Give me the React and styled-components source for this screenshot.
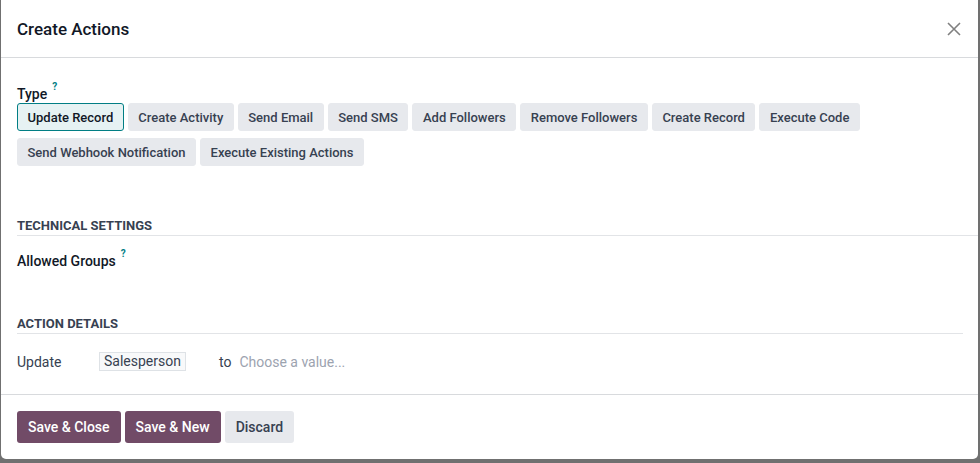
import React from "react";
import styled, { createGlobalStyle } from "styled-components";

const Global = createGlobalStyle`
  html, body { margin: 0; padding: 0; background: #707070; }
  body { font-family: Roboto, "Noto Sans", sans-serif; color: #374151; }
  * { box-sizing: border-box; }
`;

const Backdrop = styled.div`
  width: 980px;
  height: 463px;
  background: #707070;
  padding-left: 1px;
  overflow: hidden;
`;

const Modal = styled.div`
  width: 977px;
  height: 459px;
  background: #fff;
  border-radius: 0 0 5px 5px;
  display: flex;
  flex-direction: column;
`;

const Header = styled.div`
  height: 58px;
  flex-shrink: 0;
  border-bottom: 1px solid #d8dadd;
  display: flex;
  align-items: center;
  justify-content: space-between;
  padding: 0 16px 0 16px;
`;

const Title = styled.h4`
  margin: 0;
  font-size: 17px;
  font-weight: 500;
  color: #111827;
`;

const Close = styled.button`
  border: none;
  background: none;
  padding: 0;
  width: 16px;
  height: 16px;
  display: flex;
  align-items: center;
  justify-content: center;
  cursor: pointer;
`;

const Body = styled.div`
  height: 336px;
  flex-shrink: 0;
  padding: 27px 0 0 16px;
  display: flex;
  flex-direction: column;
`;

const Label = styled.div`
  font-size: 14px;
  font-weight: 500;
  color: #111827;
  line-height: 18px;
  display: flex;
  align-items: flex-start;
  gap: 5px;
  margin-top: ${(p) => p.$mt || 0}px;
`;

const Help = styled.sup`
  font-size: 10px;
  color: #017e84;
  font-weight: 700;
  line-height: 10px;
  vertical-align: top;
  margin-top: -3px;
`;

const Choices = styled.div`
  display: flex;
  flex-wrap: wrap;
  gap: 7px 4px;
  width: 900px;
`;

const Choice = styled.button`
  height: 28px;
  padding: 0 9.5px;
  font-family: inherit;
  font-size: 13px;
  font-weight: 500;
  border-radius: 3px;
  border: 1px solid ${(p) => (p.$active ? "#017e84" : "#e7e9ed")};
  background: ${(p) => (p.$active ? "#e6f2f3" : "#e7e9ed")};
  color: ${(p) => (p.$active ? "#111827" : "#374151")};
  cursor: pointer;
`;

const Section = styled.div`
  margin-top: ${(p) => p.$mt}px;
  margin-right: ${(p) => p.$mr}px;
  border-bottom: 1px solid #e2e4e7;
  padding-bottom: ${(p) => p.$pb}px;
  font-size: 13px;
  font-weight: 700;
  color: #374151;
  text-transform: uppercase;
  line-height: 16px;
`;

const Row = styled.div`
  display: flex;
  align-items: center;
  margin-top: ${(p) => p.$mt}px;
  font-size: 14px;
  color: #374151;
`;

const UpdateLabel = styled.span`
  width: 82px;
`;

const Tag = styled.span`
  border: 1px solid #dee2e6;
  background: #f8f9fa;
  padding: 0 4px;
  line-height: 17px;
  font-size: 14px;
  color: #374151;
`;

const To = styled.span`
  margin-left: 33px;
  margin-right: 8px;
`;

const Placeholder = styled.span`
  color: #9ca3af;
`;

const Footer = styled.div`
  flex: 1;
  border-top: 1px solid #d8dadd;
  display: flex;
  align-items: flex-start;
  gap: 4px;
  padding: 16px 16px 0;
`;

const Btn = styled.button`
  height: 32px;
  padding: 0 11px;
  font-family: inherit;
  font-size: 14px;
  font-weight: 500;
  border-radius: 3px;
  border: none;
  background: ${(p) => (p.$primary ? "#714b67" : "#e7e9ed")};
  color: ${(p) => (p.$primary ? "#fff" : "#374151")};
  cursor: pointer;
`;

const types = [
  "Update Record",
  "Create Activity",
  "Send Email",
  "Send SMS",
  "Add Followers",
  "Remove Followers",
  "Create Record",
  "Execute Code",
  "Send Webhook Notification",
  "Execute Existing Actions",
];

export default function App() {
  return (
    <Backdrop>
      <Global />
      <Modal>
        <Header>
          <Title>Create Actions</Title>
          <Close aria-label="Close">
            <svg width="14" height="14" viewBox="0 0 14 14">
              <path d="M1 1L13 13M13 1L1 13" stroke="#808080" strokeWidth="1.6" />
            </svg>
          </Close>
        </Header>
        <Body>
          <Label>
            Type<Help>?</Help>
          </Label>
          <Choices>
            {types.map((t, i) => (
              <Choice key={t} $active={i === 0}>
                {t}
              </Choice>
            ))}
          </Choices>
          <Section $mt={52} $mr={0} $pb={1}>Technical Settings</Section>
          <Label $mt={16}>
            Allowed Groups<Help>?</Help>
          </Label>
          <Section $mt={46} $mr={15} $pb={1}>Action Details</Section>
          <Row $mt={18}>
            <UpdateLabel>Update</UpdateLabel>
            <Tag>Salesperson</Tag>
            <To>to</To>
            <Placeholder>Choose a value...</Placeholder>
          </Row>
        </Body>
        <Footer>
          <Btn $primary>Save &amp; Close</Btn>
          <Btn $primary>Save &amp; New</Btn>
          <Btn>Discard</Btn>
        </Footer>
      </Modal>
    </Backdrop>
  );
}
